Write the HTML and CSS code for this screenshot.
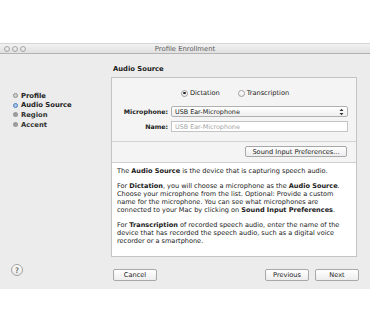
FILE: index.html
```html
<!DOCTYPE html>
<html lang="en">
<head>
<meta charset="utf-8">
<title>Profile Enrollment</title>
<link rel="stylesheet" href="styles.css">
</head>
<body>
<div class="window">
  <div class="titlebar">
    <div class="lights"><span class="light"></span><span class="light"></span><span class="light"></span></div>
    <div class="title">Profile Enrollment</div>
    <div></div>
  </div>
  <div class="content">
    <ul class="steps">
      <li class="step done"><span class="dot"></span>Profile</li>
      <li class="step current"><span class="dot"></span>Audio Source</li>
      <li class="step todo"><span class="dot"></span>Region</li>
      <li class="step todo"><span class="dot"></span>Accent</li>
    </ul>
    <main class="main">
      <h2 class="heading">Audio Source</h2>
      <div class="box">
        <div class="box-form">
          <div class="radios">
            <span class="radio"><span class="radio-dot checked"></span>Dictation</span>
            <span class="radio"><span class="radio-dot"></span>Transcription</span>
          </div>
          <div class="field-row">
            <span class="field-label">Microphone:</span>
            <div class="select"><span>USB Ear-Microphone</span>
              <svg class="stepper" width="5" height="8" viewBox="0 0 5 8"><path d="M0.5 3 L2.5 0.8 L4.5 3 Z M0.5 5 L2.5 7.2 L4.5 5 Z" fill="#333"/></svg>
            </div>
          </div>
          <div class="field-row">
            <span class="field-label">Name:</span>
            <div class="input">USB Ear-Microphone</div>
          </div>
        </div>
        <div class="box-actions"><span class="btn btn-wide">Sound Input Preferences...</span></div>
        <div class="box-help">
          <p>The <b>Audio Source</b> is the device that is capturing speech audio.</p>
          <p>For <b>Dictation</b>, you will choose a microphone as the <b>Audio Source</b>. Choose your microphone from the list. Optional: Provide a custom name for the microphone. You can see what microphones are connected to your Mac by clicking on <b>Sound Input Preferences</b>.</p>
          <p>For <b>Transcription</b> of recorded speech audio, enter the name of the device that has recorded the speech audio, such as a digital voice recorder or a smartphone.</p>
        </div>
      </div>
    </main>
    <div class="help-cell"><span class="help">?</span></div>
    <div class="footer">
      <span class="btn btn-nav">Cancel</span>
      <span class="spacer"></span>
      <span class="btn btn-nav">Previous</span>
      <span class="btn btn-nav">Next</span>
    </div>
  </div>
</div>
</body>
</html>
```
FILE: styles.css
```css
* { box-sizing: border-box; }
html, body { margin: 0; padding: 0; background: #fff; }
body {
  padding-top: 43px;
  font-family: "DejaVu Sans", "Noto Sans", sans-serif;
  color: #1a1a1a;
}
.window {
  width: 370px;
  height: 246px;
  background: #ececec;
  display: flex;
  flex-direction: column;
}
.titlebar {
  height: 12px;
  display: grid;
  grid-template-columns: 1fr auto 1fr;
  align-items: center;
  background: linear-gradient(#f2f2f2, #e0e0e0);
  border-top: 1px solid #d6d6d6;
  border-bottom: 1px solid #b3b3b3;
}
.lights { display: flex; gap: 2px; padding-left: 4px; }
.light {
  width: 6px; height: 6px; border-radius: 50%;
  border: 1px solid #a9a9a9;
  background: radial-gradient(circle at 50% 35%, #f4f4f4, #d3d3d3);
}
.title { font-size: 6.8px; color: #606060; padding-top: 1px; }
.content {
  flex: 1;
  display: grid;
  grid-template-columns: 111px 248px;
  grid-template-rows: 1fr 32px;
}
.steps {
  list-style: none;
  margin: 0;
  padding: 37px 0 0 13px;
}
.step {
  display: flex;
  align-items: center;
  gap: 3px;
  height: 9.6px;
  font-size: 6.8px;
  font-weight: bold;
  color: #222;
}
.step.todo { color: #333; }
.dot {
  width: 5px; height: 5px; border-radius: 50%;
  background: #9b9b9b;
}
.done .dot { background: #d2d2d2; border: 1px solid #8d8d8d; }
.current .dot { background: #a9c6ea; border: 1px solid #4b7fc0; }
.main { padding-top: 11px; }
.heading {
  margin: 0 0 3px 2px;
  font-size: 6.8px;
  line-height: 9px;
  font-weight: bold;
}
.box {
  width: 246px;
  border: 1px solid #c4c4c4;
  background: #f4f4f4;
}
.box-form {
  padding: 10px 8px 9px 0;
  border-bottom: 1px solid #d3d3d3;
}
.radios {
  display: flex;
  justify-content: center;
  gap: 18px;
  padding-left: 10px;
  height: 10px;
  align-items: center;
  font-size: 6.6px;
  margin-bottom: 8px;
}
.radio { display: flex; align-items: center; gap: 2px; }
.radio-dot {
  width: 7px; height: 7px; border-radius: 50%;
  border: 1px solid #a0a0a0;
  background: linear-gradient(#fff, #ececec);
  display: flex; align-items: center; justify-content: center;
}
.radio-dot.checked::after {
  content: "";
  width: 2.5px; height: 2.5px; border-radius: 50%;
  background: #222;
}
.field-row {
  display: grid;
  grid-template-columns: 56px 1fr;
  gap: 3px;
  align-items: center;
  margin-bottom: 4px;
}
.field-row:last-child { margin-bottom: 0; }
.field-label {
  text-align: right;
  font-size: 6.3px;
  font-weight: bold;
  color: #222;
}
.select, .input {
  height: 11px;
  font-size: 6.4px;
  display: flex;
  align-items: center;
  padding: 0 3px;
}
.select {
  justify-content: space-between;
  border: 1px solid #b0b0b0;
  border-radius: 2px;
  background: linear-gradient(#ffffff, #efefef);
  color: #222;
}
.input {
  border: 1px solid #c4c4c4;
  background: #fff;
  color: #a6a6a6;
}
.box-actions {
  display: flex;
  justify-content: flex-end;
  padding: 4px 9px 5px;
  border-bottom: 1px solid #cfcfcf;
}
.btn {
  display: flex;
  align-items: center;
  justify-content: center;
  height: 12px;
  font-size: 6.6px;
  color: #222;
  border: 1px solid #a8a8a8;
  border-radius: 2px;
  background: linear-gradient(#ffffff, #ededed);
}
.btn-wide { width: 102px; height: 11px; }
.box-help {
  background: #fff;
  padding: 4px 5px 4px;
  font-size: 6.55px;
  line-height: 8px;
  height: 93px;
}
.box-help p { margin: 0 0 7px; }
.help-cell {
  display: flex;
  padding: 7px 0 0 11px;
}
.help {
  width: 12px; height: 12px; border-radius: 50%;
  border: 1px solid #a3a3a3;
  background: linear-gradient(#fff, #e6e6e6);
  font-size: 7.5px;
  display: flex; align-items: center; justify-content: center;
  color: #333;
}
.footer {
  display: flex;
  gap: 6px;
  padding: 12px 0 0 2px;
  align-items: flex-start;
}
.spacer { flex: 1; }
.btn-nav { width: 44px; }
```
